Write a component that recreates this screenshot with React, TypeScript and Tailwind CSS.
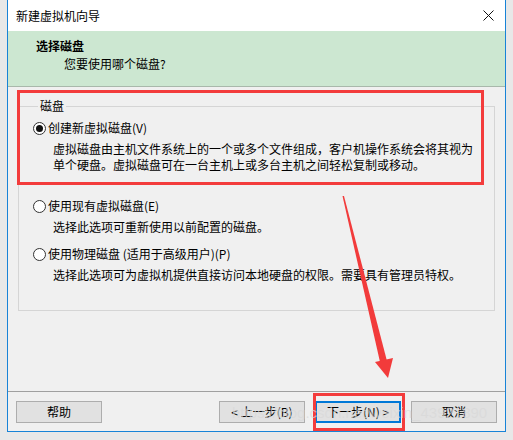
import React from 'react';

const font = "font-['Microsoft_YaHei_UI','Noto_Sans_CJK_SC',sans-serif]";

function Radio({ checked }: { checked?: boolean }) {
    return (
        <span className="w-[13px] h-[13px] rounded-full border border-[#333] bg-white flex items-center justify-center shrink-0">
            {checked && <span className="w-[7px] h-[7px] rounded-full bg-[#111]" />}
        </span>
    );
}

const options = [
    {
        label: '创建新虚拟磁盘(V)',
        checked: true,
        desc: ['虚拟磁盘由主机文件系统上的一个或多个文件组成，客户机操作系统会将其视为', '单个硬盘。虚拟磁盘可在一台主机上或多台主机之间轻松复制或移动。'],
        mt: 'mt-[6px]',
    },
    {
        label: '使用现有虚拟磁盘(E)',
        desc: ['选择此选项可重新使用以前配置的磁盘。'],
        mt: 'mt-[25px]',
    },
    {
        label: '使用物理磁盘 (适用于高级用户)(P)',
        desc: ['选择此选项可为虚拟机提供直接访问本地硬盘的权限。需要具有管理员特权。'],
        mt: 'mt-[11px]',
    },
];

function Button({ children, primary }: { children: React.ReactNode; primary?: boolean }) {
    return (
        <button
            className={
                'w-[86px] h-[22px] bg-[#e1e1e1] text-[12px] leading-4 text-black flex items-center justify-center ' +
                (primary ? 'border-2 border-[#0078d7]' : 'border border-[#adadad]')
            }
        >
            {children}
        </button>
    );
}

export default function App() {
    return (
        <div className={`relative w-[513px] h-[440px] overflow-hidden bg-[#e8e8e8] ${font}`}>
            <div className="ml-[7px] w-[499px] h-[432px] border-x border-b border-[#1883d7] bg-[#f0f0f0] flex flex-col">
                {/* title bar */}
                <div className="h-[31px] bg-white flex items-center justify-between pl-[8px] pr-[9px] shrink-0">
                    <span className="text-[12px] leading-4 text-black">新建虚拟机向导</span>
                    <svg width="11" height="11" viewBox="0 0 11 11" className="mr-[2px]">
                        <path d="M0.5 0.5 L10.5 10.5 M10.5 0.5 L0.5 10.5" stroke="#111" strokeWidth="1" />
                    </svg>
                </div>

                {/* header */}
                <div className="h-[56px] bg-[#cce7d1] border-b border-[#a8b8ab] pl-[28px] pt-[7px] shrink-0">
                    <div className="text-[12px] leading-4 font-bold text-black">选择磁盘</div>
                    <div className="text-[12px] leading-4 text-black mt-[2px] ml-[28px]">您要使用哪个磁盘?</div>
                </div>

                {/* body */}
                <div className="flex-1 px-[10px]">
                    <fieldset className="mt-[11px] border border-[#d5d5d5] pl-[14px] pb-[27px]">
                        <legend className="ml-[5px] px-[2px] text-[12px] leading-4 text-black">磁盘</legend>
                        {options.map((o) => (
                            <div key={o.label} className={o.mt}>
                                <label className="flex items-center gap-[2px] h-4 text-[12px] leading-4 text-black">
                                    <Radio checked={o.checked} />
                                    <span>{o.label}</span>
                                </label>
                                <div className="pl-[20px] text-[12px] leading-4 text-black mt-[5px]">
                                    {o.desc.map((d) => (
                                        <div key={d}>{d}</div>
                                    ))}
                                </div>
                            </div>
                        ))}
                    </fieldset>
                </div>

                {/* footer */}
                <div className="h-[40px] border-t border-[#a0a0a0] flex items-start justify-between px-[8px] pt-[9px] shrink-0">
                    <Button>帮助</Button>
                    <div className="flex gap-[10px]">
                        <Button>&lt; 上一步(B)</Button>
                        <Button primary>下一步(N) &gt;</Button>
                        <Button>取消</Button>
                    </div>
                </div>
            </div>

            {/* annotations */}
            <div className="absolute left-[17px] top-[90px] w-[467px] h-[95px] border-[3px] border-[#f33c3c]" />
            <div className="absolute left-[313px] top-[393px] w-[92px] h-[38px] border-[3px] border-[#f33c3c]" />
            <svg className="absolute left-0 top-0" width="513" height="440" viewBox="0 0 513 440">
                <polygon points="342.5,196 344,196 387,361 380,362" fill="#f23b3b" />
                <polygon points="375,362 393,358 388,378" fill="#f23b3b" />
            </svg>
            <div className="absolute left-[232px] top-[403px] text-[15px] leading-5 text-[#d8d8d8]/70 font-['Liberation_Sans',sans-serif] whitespace-nowrap">
                https://blog.csdn.net/weixin_43921890
            </div>
        </div>
    );
}
